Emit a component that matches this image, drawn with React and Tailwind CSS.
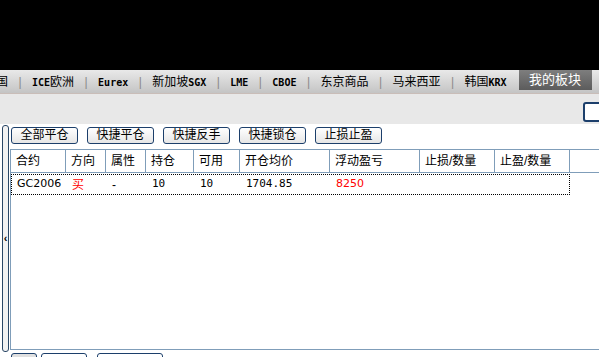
import React from 'react';

const tabs = [
  ['ICE', '欧洲'],
  ['Eurex', ''],
  ['', '新加坡', 'SGX'],
  ['LME', ''],
  ['CBOE', ''],
  ['', '东京商品'],
  ['', '马来西亚'],
  ['', '韩国', 'KRX'],
];

const actions = ['全部平仓', '快捷平仓', '快捷反手', '快捷锁仓', '止损止盈'];

const columns = [
  { name: '合约', w: 'w-[55px]' },
  { name: '方向', w: 'w-[40px]' },
  { name: '属性', w: 'w-[40px]' },
  { name: '持仓', w: 'w-[48px]' },
  { name: '可用', w: 'w-[46px]' },
  { name: '开仓均价', w: 'w-[90px]' },
  { name: '浮动盈亏', w: 'w-[90px]' },
  { name: '止损/数量', w: 'w-[75px]' },
  { name: '止盈/数量', w: 'w-[75px]' },
];

const row = [
  { v: 'GC2006', sans: true },
  { v: '买', red: true },
  { v: '-' },
  { v: '10', mono: true },
  { v: '10', mono: true },
  { v: '1704.85', mono: true },
  { v: '8250', sans: true, red: true },
  { v: '' },
  { v: '' },
];

const Latin = ({ children }) =>
  children ? (
    <span className="text-[10px] font-bold" style={{ fontFamily: '"DejaVu Sans Mono", monospace' }}>
      {children}
    </span>
  ) : null;

const ActionButton = ({ label }) => (
  <button className="h-[17px] w-[67px] shrink-0 rounded-[3px] border border-[#1c3f6b] bg-gradient-to-b from-white to-[#e6e6e6] text-[12px] leading-[15px] text-black">
    {label}
  </button>
);

export default function App() {
  return (
    <div
      className="w-[599px] h-[357px] overflow-hidden flex flex-col bg-white"
      style={{ fontFamily: '"Liberation Sans", "Noto Sans CJK SC", sans-serif' }}
    >
      {/* Top black */}
      <div className="h-[70px] bg-black shrink-0" />

      {/* Exchange tabs */}
      <div className="h-[24px] shrink-0 flex items-center bg-gradient-to-b from-[#e9e9e9] to-[#c4c4c4] border-b border-[#c9bdb8] text-[12px] text-black whitespace-nowrap">
        <span className="ml-[-4px]">国</span>
        {tabs.map((t, i) => (
          <React.Fragment key={i}>
            <span className="w-[24px] shrink-0 text-center text-[#8a8a8a]">|</span>
            <span className="shrink-0">
              <Latin>{t[0]}</Latin>
              {t[1]}
              <Latin>{t[2]}</Latin>
            </span>
          </React.Fragment>
        ))}
        <div className="ml-[12px] h-[20px] self-start w-[73px] shrink-0 flex items-center justify-center bg-gradient-to-b from-[#7e7e7e] to-[#5c5c5c] text-white text-[13px]">
          我的板块
        </div>
      </div>

      {/* Gray toolbar strip */}
      <div className="h-[30px] shrink-0 bg-[#e8e8e8] flex overflow-hidden">
        <div className="w-[583px] shrink-0" />
        <div className="mt-[8px] h-[20px] w-[40px] shrink-0 rounded-[3px] border-2 border-[#1c3f6b] bg-white" />
      </div>

      {/* Main panel */}
      <div className="flex-1 flex min-h-0">
        {/* collapse handle */}
        <div className="w-[10px] shrink-0 pl-[2px] pt-[1px] pb-[5px]">
          <div className="h-full w-[7px] rounded-[3px] border border-[#2a4766] bg-[#f2f2f2] flex items-center justify-center text-[11px] font-bold leading-none">
            ‹
          </div>
        </div>

        <div className="flex-1 flex flex-col min-w-0">
          <div className="h-[25px] flex items-start gap-[9px] pt-[3px] pl-[1px]">
            {actions.map((a) => (
              <ActionButton key={a} label={a} />
            ))}
          </div>

          {/* Table */}
          <div className="h-[201px] border-t border-l border-b border-[#7f9db9] flex flex-col">
            <div className="h-[23px] flex border-b border-[#7f9db9] text-[12px]">
              {columns.map((c) => (
                <div key={c.name} className={`${c.w} shrink-0 border-r border-[#7f9db9] pl-[5px] flex items-center`}>
                  {c.name}
                </div>
              ))}
            </div>
            <div className="mt-[1px] h-[21px] w-[559px] flex border border-dotted border-black text-[12px]">
              {row.map((c, i) => (
                <div
                  key={i}
                  className={`${columns[i].w} shrink-0 pl-[5px] flex items-center ${c.red ? 'text-[#ff0000]' : 'text-black'}`}
                  style={
                    c.mono
                      ? { fontFamily: '"DejaVu Sans Mono", monospace', fontSize: '11px' }
                      : c.sans
                      ? { fontFamily: '"DejaVu Sans", sans-serif', fontSize: '11px' }
                      : undefined
                  }
                >
                  {c.v}
                </div>
              ))}
            </div>
          </div>

          {/* Bottom tabs (cut off) */}
          <div className="flex-1 flex items-start pt-[3px] pl-[1px] overflow-hidden">
            <div className="h-[10px] w-[26px] rounded-t-[3px] border border-[#1c3f6b] bg-[#e0e0e0]" />
            <div className="ml-[4px] h-[10px] w-[46px] rounded-t-[3px] border border-[#1c3f6b] bg-white" />
            <div className="ml-[10px] h-[10px] w-[66px] rounded-t-[3px] border border-[#1c3f6b] bg-white" />
          </div>
        </div>
      </div>
    </div>
  );
}
